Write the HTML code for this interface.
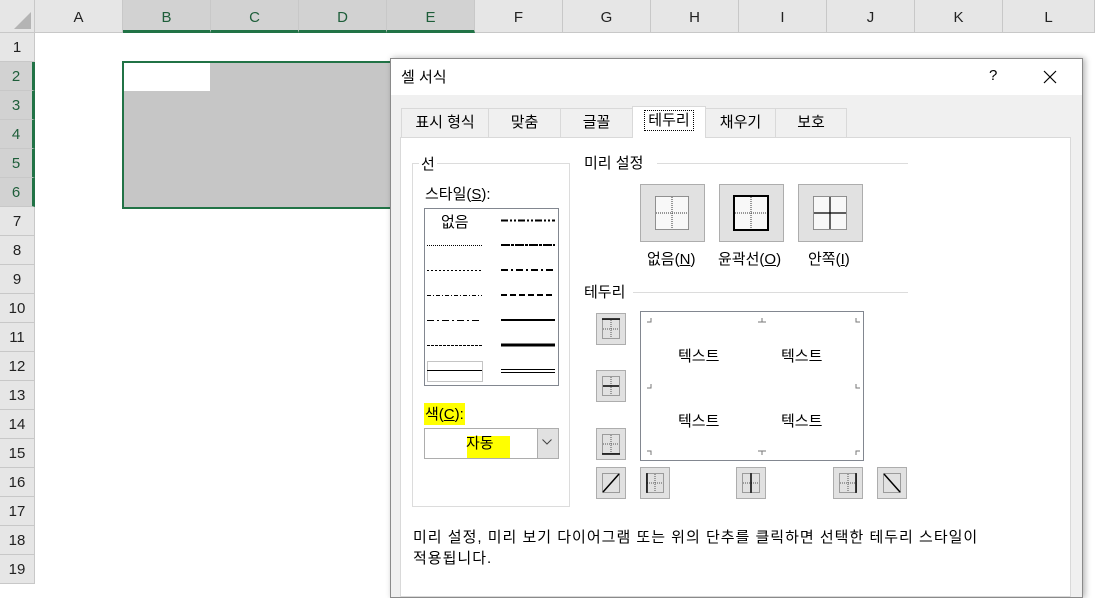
<!DOCTYPE html>
<html><head><meta charset="utf-8"><style>
*{margin:0;padding:0;box-sizing:border-box}
body{width:1095px;height:588px;overflow:hidden;background:#fff;position:relative;font-family:"Liberation Sans","Noto Sans CJK KR",sans-serif;font-size:15px;color:#000}
.a{position:absolute}
.ch{position:absolute;top:0;height:33px;background:#e6e6e6;border-right:1px solid #c8c8c8;border-bottom:1px solid #c8c8c8;text-align:center;line-height:36px;font-size:15px;color:#222}
.ch.s{background:#d2d2d2;border-bottom:3px solid #217346;color:#1e5e3a}
.rh{position:absolute;left:0;width:35px;height:29px;background:#e6e6e6;border-bottom:1px solid #c8c8c8;border-right:1px solid #c8c8c8;text-align:center;line-height:29px;font-size:15px;color:#222}
.rh.s{background:#d2d2d2;border-right:3px solid #217346;color:#1e5e3a}
.tab{position:absolute;top:108px;height:29px;border:1px solid #d9d9d9;border-bottom:none;background:#f0f0f0;text-align:center;line-height:28px;font-size:15px}
.btn{position:absolute;background:#e1e1e1;border:1px solid #adadad}
.t{position:absolute;font-size:15px;white-space:nowrap}
</style></head><body>
<div class="ch" style="left:0;width:35px;background:#e6e6e6"><svg width="35" height="33"><polygon points="31,12 31,29 14,29" fill="#b4b4b4"/></svg></div>
<div class="ch" style="left:35px;width:88px">A</div>
<div class="ch s" style="left:123px;width:88px">B</div>
<div class="ch s" style="left:211px;width:88px">C</div>
<div class="ch s" style="left:299px;width:88px">D</div>
<div class="ch s" style="left:387px;width:88px">E</div>
<div class="ch" style="left:475px;width:88px">F</div>
<div class="ch" style="left:563px;width:88px">G</div>
<div class="ch" style="left:651px;width:88px">H</div>
<div class="ch" style="left:739px;width:88px">I</div>
<div class="ch" style="left:827px;width:88px">J</div>
<div class="ch" style="left:915px;width:88px">K</div>
<div class="ch" style="left:1003px;width:92px">L</div>
<div class="rh" style="top:33px">1</div>
<div class="rh s" style="top:62px">2</div>
<div class="rh s" style="top:91px">3</div>
<div class="rh s" style="top:120px">4</div>
<div class="rh s" style="top:149px">5</div>
<div class="rh s" style="top:178px">6</div>
<div class="rh" style="top:207px">7</div>
<div class="rh" style="top:236px">8</div>
<div class="rh" style="top:265px">9</div>
<div class="rh" style="top:294px">10</div>
<div class="rh" style="top:323px">11</div>
<div class="rh" style="top:352px">12</div>
<div class="rh" style="top:381px">13</div>
<div class="rh" style="top:410px">14</div>
<div class="rh" style="top:439px">15</div>
<div class="rh" style="top:468px">16</div>
<div class="rh" style="top:497px">17</div>
<div class="rh" style="top:526px">18</div>
<div class="rh" style="top:555px">19</div>
<div class="a" style="left:122px;top:61px;width:272px;height:148px;border:2px solid #217346;background:#c6c6c6"></div>
<div class="a" style="left:124px;top:63px;width:86px;height:28px;background:#fff"></div>
<div class="a" style="left:390px;top:58px;width:693px;height:540px;background:#f0f0f0;border:1px solid #8a8a8a;box-shadow:2px 0 6px rgba(0,0,0,.3)"></div>
<div class="a" style="left:391px;top:59px;width:691px;height:36px;background:#fff"></div>
<div class="t" style="left:401px;top:66px">셀 서식</div>
<div class="t" style="left:989px;top:67px">?</div>
<svg class="a" style="left:1043px;top:70px" width="14" height="14"><path d="M1 1L13 13M13 1L1 13" stroke="#000" stroke-width="1.2"/></svg>
<div class="tab" style="left:401px;width:88px">표시 형식</div>
<div class="tab" style="left:488px;width:73px">맞춤</div>
<div class="tab" style="left:560px;width:73px">글꼴</div>
<div class="tab" style="left:775px;width:72px">보호</div>
<div class="tab" style="left:705px;width:71px">채우기</div>
<div class="a" style="left:400px;top:137px;width:671px;height:460px;background:#fff;border:1px solid #d9d9d9"></div>
<div class="tab" style="left:632px;top:106px;width:74px;height:32px;background:#fff;z-index:2;line-height:28px"><span style="border:1px dotted #000;padding:1px 3px">테두리</span></div>
<div class="a" style="left:412px;top:163px;width:158px;height:344px;border:1px solid #dcdcdc"></div>
<div class="t" style="left:419px;top:153px;background:#fff;padding:0 2px">선</div>
<div class="t" style="left:425px;top:183px">스타일(<u>S</u>):</div>
<div class="a" style="left:424px;top:208px;width:135px;height:178px;border:1px solid #828790;background:#fff"></div>
<div class="t" style="left:441px;top:211px">없음</div>
<svg class="a" style="left:424px;top:208px" width="135" height="178">
<g stroke="#000" fill="none">
<line x1="77" y1="12.5" x2="131" y2="12.5" stroke-width="2" stroke-dasharray="7,2,2,2,2,2"/>
<line x1="3" y1="37.5" x2="58" y2="37.5" stroke-width="1" stroke-dasharray="1,1"/>
<line x1="77" y1="37" x2="131" y2="37" stroke-width="2" stroke-dasharray="9,1,3,1"/>
<line x1="3" y1="62.5" x2="58" y2="62.5" stroke-width="1" stroke-dasharray="2,2"/>
<line x1="77" y1="62" x2="131" y2="62" stroke-width="2" stroke-dasharray="7,3,2,3"/>
<line x1="3" y1="87.5" x2="58" y2="87.5" stroke-width="1" stroke-dasharray="4,2,1,2"/>
<line x1="77" y1="87" x2="131" y2="87" stroke-width="2" stroke-dasharray="6,3"/>
<line x1="3" y1="112.5" x2="58" y2="112.5" stroke-width="1" stroke-dasharray="7,3,2,3"/>
<line x1="77" y1="112" x2="131" y2="112" stroke-width="2"/>
<line x1="3" y1="137.5" x2="58" y2="137.5" stroke-width="1" stroke-dasharray="3,1"/>
<line x1="77" y1="137" x2="131" y2="137" stroke-width="3"/>
<rect x="3.5" y="153.5" width="55" height="20" stroke="#888" stroke-dasharray="1,1"/>
<line x1="3" y1="162.5" x2="58" y2="162.5" stroke-width="1"/>
<line x1="77" y1="161.5" x2="131" y2="161.5" stroke-width="1"/>
<line x1="77" y1="164.5" x2="131" y2="164.5" stroke-width="1"/>
</g></svg>
<div class="a" style="left:424px;top:403px;width:41px;height:22px;background:#ffff00"></div>
<div class="t" style="left:425px;top:403px">색(<u>C</u>):</div>
<div class="a" style="left:424px;top:428px;width:135px;height:31px;border:1px solid #adadad;background:#fff"></div>
<div class="a" style="left:537px;top:429px;width:21px;height:29px;background:#e1e1e1;border-left:1px solid #adadad"></div>
<svg class="a" style="left:542px;top:439px" width="10" height="6"><path d="M0.5 0.5L5 5L9.5 0.5" stroke="#444" fill="none"/></svg>
<div class="a" style="left:467px;top:436px;width:43px;height:22px;background:#ffff00"></div>
<div class="t" style="left:466px;top:432px">자동</div>
<div class="t" style="left:584px;top:152px">미리 설정</div>
<div class="a" style="left:657px;top:163px;width:251px;height:1px;background:#dcdcdc"></div>
<div class="btn" style="left:640px;top:184px;width:65px;height:58px"></div>
<div class="btn" style="left:719px;top:184px;width:65px;height:58px"></div>
<div class="btn" style="left:798px;top:184px;width:65px;height:58px"></div>
<svg class="a" style="left:654px;top:195px" width="36" height="36"><g fill="#f8f8f8" stroke="#333" stroke-dasharray="1,1"><rect x="1.5" y="1.5" width="33" height="33"/><path d="M18 2V34M2 18H34"/></g></svg>
<svg class="a" style="left:733px;top:195px" width="36" height="36"><rect x="1" y="1" width="34" height="34" fill="#f8f8f8" stroke="#000" stroke-width="2"/><path d="M18 2V34M2 18H34" stroke="#333" stroke-dasharray="1,1"/></svg>
<svg class="a" style="left:812px;top:195px" width="36" height="36"><g fill="#f8f8f8" stroke="#333" stroke-dasharray="1,1"><rect x="1.5" y="1.5" width="33" height="33"/></g><path d="M18 2V34M2 18H34" stroke="#000" stroke-width="1.2"/></svg>
<div class="t" style="left:647px;top:248px">없음(<u>N</u>)</div>
<div class="t" style="left:718px;top:248px">윤곽선(<u>O</u>)</div>
<div class="t" style="left:808px;top:248px">안쪽(<u>I</u>)</div>
<div class="t" style="left:584px;top:281px">테두리</div>
<div class="a" style="left:633px;top:292px;width:275px;height:1px;background:#dcdcdc"></div>
<div class="a" style="left:640px;top:311px;width:224px;height:150px;border:1px solid #828790;background:#fff"></div>
<svg class="a" style="left:640px;top:311px" width="224" height="150"><g stroke="#777" fill="none">
<path d="M11 7V11H7M122 7V11M118 11H126M216 7V11H220M7 140H11V144M216 144V140H220M11 73V77H7M216 73V77H220M122 144V140M118 140H126"/></g></svg>
<div class="t" style="left:678px;top:345px">텍스트</div>
<div class="t" style="left:781px;top:345px">텍스트</div>
<div class="t" style="left:678px;top:410px">텍스트</div>
<div class="t" style="left:781px;top:410px">텍스트</div>
<div class="btn" style="left:596px;top:313px;width:30px;height:32px"></div>
<div class="btn" style="left:596px;top:370px;width:30px;height:32px"></div>
<div class="btn" style="left:596px;top:428px;width:30px;height:32px"></div>
<div class="btn" style="left:596px;top:467px;width:30px;height:32px"></div>
<div class="btn" style="left:640px;top:467px;width:30px;height:32px"></div>
<div class="btn" style="left:736px;top:467px;width:30px;height:32px"></div>
<div class="btn" style="left:833px;top:467px;width:30px;height:32px"></div>
<div class="btn" style="left:877px;top:467px;width:30px;height:32px"></div>
<svg class="a" style="left:0;top:0" width="1095" height="588"><g fill="none" stroke="#555" stroke-dasharray="1,1">
<rect x="602.5" y="319.5" width="17" height="19"/><path d="M611 320V338M603 329H619"/>
<rect x="602.5" y="376.5" width="17" height="19"/><path d="M611 377V395"/>
<rect x="602.5" y="434.5" width="17" height="19"/><path d="M611 435V453M603 444H619"/>
<rect x="602.5" y="473.5" width="17" height="19"/>
<rect x="646.5" y="473.5" width="17" height="19"/><path d="M655 474V492M647 483H663"/>
<rect x="742.5" y="473.5" width="17" height="19"/><path d="M743 483H759"/>
<rect x="839.5" y="473.5" width="17" height="19"/><path d="M848 474V492M840 483H856"/>
<rect x="883.5" y="473.5" width="17" height="19"/>
</g><g stroke="#000" stroke-width="1.5">
<path d="M602 319H620M603 386H619M602 454H620M603 492L619 474M647 473V493M751 473V493M856 473V493M884 474L900 492"/></g></svg>
<div class="t" style="left:413px;top:526px;letter-spacing:1px">미리 설정, 미리 보기 다이어그램 또는 위의 단추를 클릭하면 선택한 테두리 스타일이</div>
<div class="t" style="left:413px;top:547px;letter-spacing:1px">적용됩니다.</div>
</body></html>
